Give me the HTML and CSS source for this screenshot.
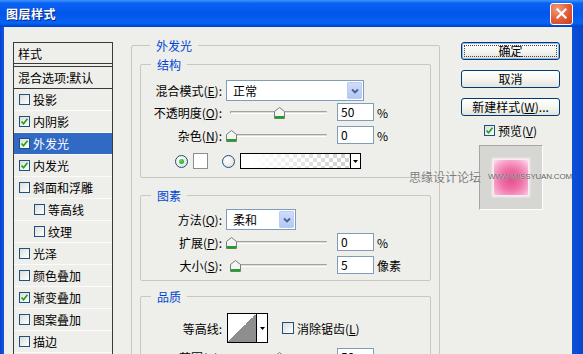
FILE: index.html
```html
<!DOCTYPE html>
<html lang="zh-CN">
<head>
    <meta charset="UTF-8">
    <title>图层样式</title>
    <link rel="stylesheet" href="styles.css">
</head>
<body>
    <div class="window">
        <div class="titlebar">
            <span class="title">图层样式</span>
            <span class="close">
                <svg width="11" height="11" viewBox="0 0 11 11"><path d="M1.5 1.5L9.5 9.5M9.5 1.5L1.5 9.5" stroke="#fff" stroke-width="2.2" stroke-linecap="square"/></svg>
            </span>
        </div>

        <div class="client">
            <ul class="style-list">
                <li class="head">样式</li>
                <li class="blend">混合选项:默认</li>
                <li><span class="cb"></span>投影</li>
                <li><span class="cb"><svg class="tick" viewBox="0 0 9 9"><path d="M1.5 4.5l2 2.2 4-5"/></svg></span>内阴影</li>
                <li class="sel"><span class="cb"><svg class="tick" viewBox="0 0 9 9"><path d="M1.5 4.5l2 2.2 4-5"/></svg></span>外发光</li>
                <li><span class="cb"><svg class="tick" viewBox="0 0 9 9"><path d="M1.5 4.5l2 2.2 4-5"/></svg></span>内发光</li>
                <li><span class="cb"></span>斜面和浮雕</li>
                <li class="sub"><span class="cb"></span>等高线</li>
                <li class="sub"><span class="cb"></span>纹理</li>
                <li><span class="cb"></span>光泽</li>
                <li><span class="cb"></span>颜色叠加</li>
                <li><span class="cb"><svg class="tick" viewBox="0 0 9 9"><path d="M1.5 4.5l2 2.2 4-5"/></svg></span>渐变叠加</li>
                <li><span class="cb"></span>图案叠加</li>
                <li><span class="cb"></span>描边</li>
                <li></li>
            </ul>

            <fieldset class="group outer">
                <legend>外发光</legend>

                <fieldset class="group sub-group structure">
                    <legend>结构</legend>
                    <div class="row tall r-first">
                        <span class="lbl">混合模式(<u>E</u>):</span>
                        <div class="select wide">正常<span class="drop"><svg width="8" height="6" viewBox="0 0 8 6"><path d="M1 1.5L4 4.5 7 1.5" fill="none" stroke="#4d6185" stroke-width="1.8"/></svg></span></div>
                    </div>
                    <div class="row r-2">
                        <span class="lbl">不透明度(<u>O</u>):</span>
                        <div class="slider"><div class="track"></div><svg class="thumb" style="left: 50%" width="11" height="12" viewBox="0 0 11 12"><path d="M0.5 4.5L5.5 0.5 10.5 4.5V11.5H0.5Z" fill="#f4f4f2" stroke="#7c7c7c"/><rect x="1" y="9" width="9" height="2.5" fill="#1f9f2b"/></svg></div>
                        <div class="num">50</div><span class="unit">%</span>
                    </div>
                    <div class="row r-5">
                        <span class="lbl">杂色(<u>N</u>):</span>
                        <div class="slider"><div class="track"></div><svg class="thumb" style="left: 1%" width="11" height="12" viewBox="0 0 11 12"><path d="M0.5 4.5L5.5 0.5 10.5 4.5V11.5H0.5Z" fill="#f4f4f2" stroke="#7c7c7c"/><rect x="1" y="9" width="9" height="2.5" fill="#1f9f2b"/></svg></div>
                        <div class="num">0</div><span class="unit">%</span>
                    </div>
                    <div class="row color-row">
                        <span class="radio on"></span>
                        <span class="swatch"></span>
                        <span class="radio second"></span>
                        <div class="gradient"><span class="arrow"><svg width="5" height="3" viewBox="0 0 5 3"><path d="M0 0H5L2.5 3Z" fill="#000"/></svg></span></div>
                    </div>
                </fieldset>

                <fieldset class="group sub-group elements">
                    <legend>图素</legend>
                    <div class="row tall r-6">
                        <span class="lbl">方法(<u>Q</u>):</span>
                        <div class="select narrow">柔和<span class="drop"><svg width="8" height="6" viewBox="0 0 8 6"><path d="M1 1.5L4 4.5 7 1.5" fill="none" stroke="#4d6185" stroke-width="1.8"/></svg></span></div>
                    </div>
                    <div class="row r-3">
                        <span class="lbl">扩展(<u>P</u>):</span>
                        <div class="slider"><div class="track"></div><svg class="thumb" style="left: 1%" width="11" height="12" viewBox="0 0 11 12"><path d="M0.5 4.5L5.5 0.5 10.5 4.5V11.5H0.5Z" fill="#f4f4f2" stroke="#7c7c7c"/><rect x="1" y="9" width="9" height="2.5" fill="#1f9f2b"/></svg></div>
                        <div class="num">0</div><span class="unit">%</span>
                    </div>
                    <div class="row r-5">
                        <span class="lbl">大小(<u>S</u>):</span>
                        <div class="slider"><div class="track"></div><svg class="thumb" style="left: 5%" width="11" height="12" viewBox="0 0 11 12"><path d="M0.5 4.5L5.5 0.5 10.5 4.5V11.5H0.5Z" fill="#f4f4f2" stroke="#7c7c7c"/><rect x="1" y="9" width="9" height="2.5" fill="#1f9f2b"/></svg></div>
                        <div class="num">5</div><span class="unit">像素</span>
                    </div>
                </fieldset>

                <fieldset class="group sub-group quality">
                    <legend>品质</legend>
                    <div class="row contour-row">
                        <span class="lbl">等高线:</span>
                        <div class="contour"><span class="curve"></span><span class="arrow"><svg width="5" height="3" viewBox="0 0 5 3"><path d="M0 0H5L2.5 3Z" fill="#000"/></svg></span></div>
                        <span class="cb aa"></span>消除锯齿(<u>L</u>)
                    </div>
                    <div class="row r-5">
                        <span class="lbl">范围(<u>R</u>):</span>
                        <div class="slider"><div class="track"></div><svg class="thumb" style="left: 50%" width="11" height="12" viewBox="0 0 11 12"><path d="M0.5 4.5L5.5 0.5 10.5 4.5V11.5H0.5Z" fill="#f4f4f2" stroke="#7c7c7c"/><rect x="1" y="9" width="9" height="2.5" fill="#1f9f2b"/></svg></div>
                        <div class="num">50</div><span class="unit">%</span>
                    </div>
                </fieldset>
            </fieldset>

            <div class="side">
                <button class="btn default">确定</button>
                <button class="btn">取消</button>
                <button class="btn">新建样式(<u>W</u>)...</button>
                <div class="preview-check">
                    <span class="cb"><svg class="tick" viewBox="0 0 9 9"><path d="M1.5 4.5l2 2.2 4-5"/></svg></span>预览(<u>V</u>)
                </div>
                <div class="preview"><span class="glow"></span></div>
            </div>

            <div class="watermark"><span>思缘设计论坛</span><span class="url">WWW.MISSYUAN.COM</span></div>
        </div>
    </div>
</body>
</html>
```

FILE: styles.css
```css
* {
    box-sizing: border-box;
}

body {
    margin: 0;
    width: 583px;
    height: 354px;
    overflow: hidden;
    font-family: "Noto Sans CJK SC", "Liberation Sans", sans-serif;
    font-size: 12px;
    color: #000;
    background: #0a56e4;
}

u {
    text-decoration: underline;
    text-underline-offset: 1px;
}

.window {
    height: 354px;
    display: flex;
    flex-direction: column;
    background: linear-gradient(to right, #0842cc, #1462ee 1%, #0a58e6 97%, #0845c8);
}

/* title bar */
.titlebar {
    height: 27px;
    flex: none;
    display: flex;
    align-items: center;
    justify-content: space-between;
    padding: 0 10px 0 6px;
    background: linear-gradient(#3d94ff 0%, #0b61f2 12%, #0056ea 50%, #0862f4 85%, #0050dc 94%, #003ec2 100%);
}

.title {
    color: #fff;
    font-weight: bold;
    font-size: 12px;
    letter-spacing: 0.5px;
    text-shadow: 1px 1px 0 #0a2a80;
}

.close {
    width: 23px;
    height: 22px;
    border: 1px solid #fff;
    border-radius: 3px;
    background: radial-gradient(circle at 30% 25%, #f39a7c, #e15a35 55%, #c7401d);
    display: flex;
    align-items: center;
    justify-content: center;
}

/* dialog body */
.client {
    flex: 1;
    position: relative;
    margin: 0 11px 0 4px;
    padding: 15px 0 0 9px;
    background: #eeeeea;
    display: flex;
    align-items: flex-start;
    overflow: hidden;
}

/* left style list */
.style-list {
    list-style: none;
    margin: 0;
    padding: 0;
    width: 100px;
    flex: none;
    border: 1px solid #3a3a3a;
}

.style-list li {
    height: 22px;
    display: flex;
    align-items: center;
    padding-left: 5px;
    border-bottom: 1px solid #fbfbf9;
    white-space: nowrap;
}

.style-list .head {
    height: 24px;
    padding-left: 4px;
    border-bottom: 4px double #3a3a3a;
}

.style-list .blend {
    padding-left: 4px;
    border-bottom-color: #3a3a3a;
}

.style-list .sel {
    background: #316ac5;
    color: #fff;
}

.style-list .sub {
    padding-left: 20px;
}

.cb {
    width: 11px;
    height: 11px;
    flex: none;
    margin-right: 3px;
    border: 1px solid #1c5180;
    background: linear-gradient(135deg, #dcdcd6, #fff);
    display: inline-flex;
    align-items: center;
    justify-content: center;
}

.tick {
    width: 9px;
    height: 9px;
}

.tick path {
    fill: none;
    stroke: #21a121;
    stroke-width: 1.7;
}

/* group boxes */
.group {
    margin: 0;
    border: 1px solid #c8c8bf;
    border-radius: 2px;
    min-width: 0;
}

.group legend {
    color: #0046d5;
    margin-left: 10px;
    padding: 0 6px;
    line-height: 15px;
}

.outer {
    width: 309px;
    flex: none;
    margin: -4px 0 0 18px;
    padding: 4px 8px 20px;
}

.sub-group {
    padding: 0 0 8px;
}

.elements {
    margin-top: 10px;
    padding-bottom: 6px;
}

.quality {
    margin-top: 8px;
}

.row {
    display: flex;
    align-items: center;
    height: 18px;
    white-space: nowrap;
}

.row.tall {
    height: 21px;
}

.r-first { margin-top: 8px; }
.r-2 { margin-top: 2px; }
.r-3 { margin-top: 3px; }
.r-5 { margin-top: 5px; }
.r-6 { margin-top: 6px; }

.lbl {
    width: 81px;
    flex: none;
    margin-right: 4px;
    text-align: right;
}

.select {
    height: 21px;
    flex: none;
    display: flex;
    align-items: center;
    justify-content: space-between;
    padding: 1px 1px 1px 6px;
    border: 1px solid #7f9db9;
    background: #fff;
}

.select.wide { width: 138px; }
.select.narrow { width: 70px; }

.drop {
    width: 15px;
    height: 17px;
    display: flex;
    align-items: center;
    justify-content: center;
    border: 1px solid #bccdf5;
    border-radius: 1px;
    background: linear-gradient(#cfdcfb, #b3c8f5);
}

.slider {
    position: relative;
    width: 97px;
    height: 18px;
    flex: none;
    margin-left: 4px;
    display: flex;
    align-items: center;
}

.track {
    flex: 1;
    height: 3px;
    margin-top: 1px;
    border-top: 1px solid #a3a39b;
    border-bottom: 1px solid #fff;
    border-left: 1px solid #a3a39b;
    border-radius: 1px;
    background: #dcdcd6;
}

.thumb {
    position: absolute;
    top: 4px;
    margin-left: -5px;
}

.num {
    width: 37px;
    height: 18px;
    flex: none;
    margin-left: 10px;
    padding-left: 3px;
    line-height: 16px;
    border: 1px solid #7f9db9;
    background: #fff;
}

.unit {
    margin-left: 3px;
}

.color-row {
    height: 16px;
    margin-top: 9px;
    padding-left: 34px;
}

.radio {
    width: 13px;
    height: 13px;
    flex: none;
    border-radius: 50%;
    border: 1px solid #1c5180;
    background: radial-gradient(circle at 35% 35%, #fff, #dcdcd5);
    display: flex;
    align-items: center;
    justify-content: center;
}

.radio.on::after {
    content: "";
    width: 5px;
    height: 5px;
    border-radius: 50%;
    background: radial-gradient(circle at 35% 35%, #5fd35f, #21a121);
}

.radio.second {
    margin-left: 14px;
}

.swatch {
    width: 15px;
    height: 16px;
    margin-left: 5px;
    border: 1px solid #8c8c8c;
    background: #fff;
}

.gradient {
    width: 121px;
    height: 16px;
    margin-left: 5px;
    display: flex;
    border: 1px solid #000;
    background:
        linear-gradient(to right, #fff 8%, rgba(255, 255, 255, 0) 85%),
        repeating-conic-gradient(#d2d2d2 0 25%, #fff 0 50%) 0 0 / 8px 8px;
}

.arrow {
    margin-left: auto;
    width: 10px;
    border-left: 1px solid #000;
    background: #fff;
    display: flex;
    align-items: center;
    justify-content: center;
}

.contour-row {
    height: 30px;
    margin-top: 9px;
}

.contour {
    width: 41px;
    height: 30px;
    flex: none;
    margin-left: 1px;
    display: flex;
    border: 1px solid #000;
}

.curve {
    flex: 1;
    background: linear-gradient(to top left, #8e8e8e 50%, #fff 50%);
}

.contour .arrow {
    width: 11px;
    flex: none;
}

.cb.aa {
    width: 12px;
    height: 12px;
    margin-left: 14px;
}

/* right column */
.side {
    width: 99px;
    flex: none;
    margin-left: 21px;
    display: flex;
    flex-direction: column;
    align-items: center;
}

.btn {
    width: 99px;
    height: 18px;
    padding: 0;
    border: 1px solid #003c74;
    border-radius: 3px;
    background: linear-gradient(#fff, #f5f5f1 50%, #e4e4dc);
    font-family: inherit;
    font-size: 12px;
    line-height: 14px;
    color: #000;
}

.btn + .btn {
    margin-top: 10px;
}

.btn.default {
    box-shadow: inset 0 0 0 1px #98b6ee;
    outline: 1px dotted #444;
    outline-offset: -4px;
}

.preview-check {
    height: 14px;
    margin-top: 7px;
    display: flex;
    align-items: center;
}

.preview {
    width: 64px;
    height: 65px;
    margin-top: 8px;
    border: 1px solid;
    border-color: #a6a6a2 #fff #fff #a6a6a2;
    background: #d6d6d3;
    display: flex;
    align-items: center;
    justify-content: center;
}

.glow {
    width: 34px;
    height: 35px;
    background: radial-gradient(circle at 50% 55%, #e84d8d 0%, #ef6fa6 40%, #f7a9cc 75%, #fde3ef 100%);
    box-shadow: 0 0 2px 2px #fbeef4;
}

/* site watermark over the dialog */
.watermark {
    position: absolute;
    z-index: 1;
    left: 405px;
    top: 143px;
    display: flex;
    align-items: center;
    line-height: 14px;
    color: #7c7c7c;
    text-shadow: 0 0 1px #fff;
    white-space: nowrap;
}

.watermark .url {
    margin-left: 7px;
    font-family: "Liberation Sans", sans-serif;
    font-size: 8px;
    letter-spacing: -0.2px;
    color: #5e5e5e;
}
```
